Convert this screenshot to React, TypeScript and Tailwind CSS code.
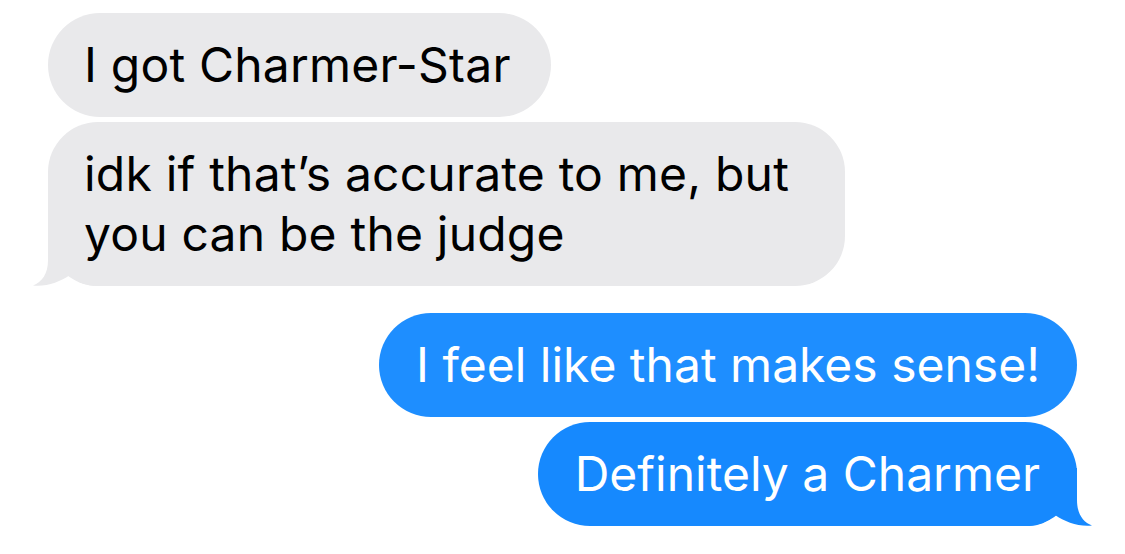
import React from 'react';

// iMessage-style bubble tail, drawn for the bottom-left corner and mirrored for the right
function Tail({ color, side }: { color: string; side: 'left' | 'right' }) {
  return (
    <svg
      width="70"
      height="58"
      viewBox="0 0 70 58"
      className={
        side === 'left'
          ? 'absolute bottom-0 left-[-16px]'
          : 'absolute bottom-0 right-[-16px] -scale-x-100'
      }
    >
      <path
        d="M16 0 V32 C16 46 10 54 1 57.5 C14 59 28 54 38 47 C46 54 54 58 64 58 H70 V0 Z"
        fill={color}
      />
    </svg>
  );
}

export default function App() {
  return (
    <div
      className="w-[1125px] h-[554px] bg-white overflow-hidden pt-[13px] px-[48px]"
      style={{ fontFamily: 'Inter, "Noto Sans", sans-serif' }}
    >
      {/* Received */}
      <div className="flex flex-col items-start gap-[5px]">
        <div className="bg-[#e9e9eb] text-black rounded-[52px] pl-[36px] pr-[40px] py-[22px] text-[48px] leading-[60px] tracking-[0.2px]">
          I got Charmer-Star
        </div>
        <div className="relative bg-[#e9e9eb] text-black rounded-[50px] pl-[36px] pr-[56px] py-[22px] text-[48px] leading-[60px] tracking-[0.2px]">
          <span className="relative z-10">
            idk if that’s accurate to me, but
            <br />
            you can be the judge
          </span>
          <Tail color="#e9e9eb" side="left" />
        </div>
      </div>

      {/* Sent */}
      <div className="flex flex-col items-end gap-[5px] mt-[27px]">
        <div className="bg-[#1e8eff] text-white rounded-[52px] px-[37px] py-[22px] text-[48px] leading-[60px]">
          I feel like that makes sense!
        </div>
        <div className="relative bg-[#1689fe] text-white rounded-[52px] px-[37px] py-[22px] text-[48px] leading-[60px]">
          <span className="relative z-10">Definitely a Charmer</span>
          <Tail color="#1689fe" side="right" />
        </div>
      </div>
    </div>
  );
}
